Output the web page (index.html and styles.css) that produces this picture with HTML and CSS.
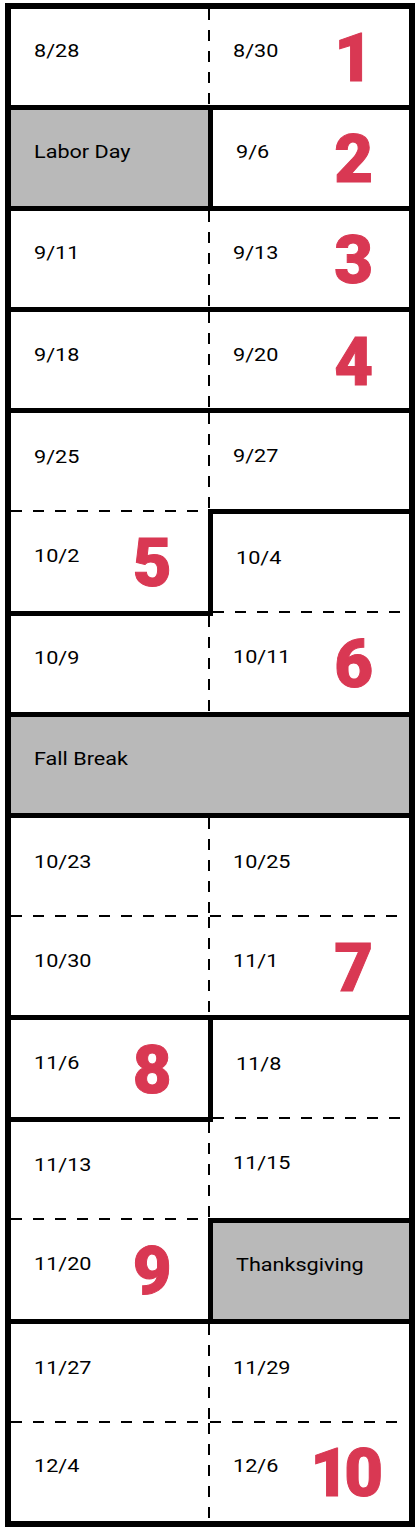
FILE: index.html
```html
<!DOCTYPE html>
<html lang="en">
<head>
<meta charset="utf-8">
<title>Schedule</title>
<link rel="stylesheet" href="styles.css">
</head>
<body>
<table class="cal">
  <tr>
    <td class="dr bb"><div class="in"><span class="d">8/28</span></div></td>
    <td class="bb"><div class="in"><span class="d">8/30</span><span class="n">1</span></div></td>
  </tr>
  <tr>
    <td class="grey br bb"><div class="in"><span class="d">Labor Day</span></div></td>
    <td class="bb"><div class="in"><span class="d">9/6</span><span class="n">2</span></div></td>
  </tr>
  <tr>
    <td class="dr bb"><div class="in"><span class="d">9/11</span></div></td>
    <td class="bb"><div class="in"><span class="d">9/13</span><span class="n">3</span></div></td>
  </tr>
  <tr>
    <td class="dr bb"><div class="in"><span class="d">9/18</span></div></td>
    <td class="bb"><div class="in"><span class="d">9/20</span><span class="n">4</span></div></td>
  </tr>
  <tr>
    <td class="dr db"><div class="in"><span class="d">9/25</span></div></td>
    <td class="bb"><div class="in"><span class="d">9/27</span></div></td>
  </tr>
  <tr>
    <td class="br bb"><div class="in"><span class="d">10/2</span><span class="n">5</span></div></td>
    <td class="db"><div class="in"><span class="d">10/4</span></div></td>
  </tr>
  <tr>
    <td class="dr bb"><div class="in"><span class="d">10/9</span></div></td>
    <td class="bb"><div class="in"><span class="d">10/11</span><span class="n">6</span></div></td>
  </tr>
  <tr>
    <td class="grey bb" colspan="2"><div class="in"><span class="d">Fall Break</span></div></td>
  </tr>
  <tr>
    <td class="dr db"><div class="in"><span class="d">10/23</span></div></td>
    <td class="db"><div class="in"><span class="d">10/25</span></div></td>
  </tr>
  <tr>
    <td class="dr bb"><div class="in"><span class="d">10/30</span></div></td>
    <td class="bb"><div class="in"><span class="d">11/1</span><span class="n">7</span></div></td>
  </tr>
  <tr>
    <td class="br bb"><div class="in"><span class="d">11/6</span><span class="n">8</span></div></td>
    <td class="db"><div class="in"><span class="d">11/8</span></div></td>
  </tr>
  <tr>
    <td class="dr db"><div class="in"><span class="d">11/13</span></div></td>
    <td class="bb"><div class="in"><span class="d">11/15</span></div></td>
  </tr>
  <tr>
    <td class="br bb"><div class="in"><span class="d">11/20</span><span class="n">9</span></div></td>
    <td class="grey bb"><div class="in"><span class="d">Thanksgiving</span></div></td>
  </tr>
  <tr>
    <td class="dr db"><div class="in"><span class="d">11/27</span></div></td>
    <td class="db"><div class="in"><span class="d">11/29</span></div></td>
  </tr>
  <tr>
    <td class="dr"><div class="in"><span class="d">12/4</span></div></td>
    <td><div class="in"><span class="d">12/6</span><span class="n n-wide">10</span></div></td>
  </tr>
</table>
</body>
</html>
```

FILE: styles.css
```css
html, body {
  margin: 0;
  padding: 0;
  background: #ffffff;
}

body {
  font-family: Roboto, "Liberation Sans", sans-serif;
  color: #000000;
}

.cal {
  border-collapse: collapse;
  table-layout: fixed;
  width: 410px;
  margin: 3px 0 0 5px;
  border: 6px solid #000000;
}

.cal tr {
  height: 101.2px;
}

.cal td {
  width: 50%;
  padding: 0;
  vertical-align: middle;
  background-color: #ffffff;
  background-repeat: no-repeat;
}

.cal td.grey {
  background-color: #b9b9b9;
}

.cal td.bb {
  border-bottom: 5px solid #000000;
}

.cal td.br {
  border-right: 5px solid #000000;
}

.cal td.dr {
  background-image: repeating-linear-gradient(to bottom, #000000 0 11px, transparent 11px 21px);
  background-position: right top;
  background-size: 2px 100%;
}

.cal td.db {
  background-image: repeating-linear-gradient(to right, #000000 0 11px, transparent 11px 22px);
  background-position: left bottom;
  background-size: calc(100% - 8px) 2px;
}

.cal td.dr.db {
  background-image:
    repeating-linear-gradient(to bottom, #000000 0 11px, transparent 11px 21px),
    repeating-linear-gradient(to right, #000000 0 11px, transparent 11px 22px);
  background-position: right top, left bottom;
  background-size: 2px 100%, calc(100% - 8px) 2px;
}

.in {
  display: flex;
  align-items: center;
  height: 80px;
  padding: 0 36px 0 23px;
}

.d {
  display: inline-block;
  font-size: 18px;
  line-height: 1;
  white-space: nowrap;
  transform: scaleX(1.2);
  transform-origin: 0 50%;
  margin-bottom: 11px;
}

.n {
  margin-left: auto;
  margin-top: 4px;
  font-size: 67px;
  font-weight: 900;
  line-height: 1;
  color: #d93853;
  -webkit-text-stroke: 1px #d93853;
}

.n-wide {
  letter-spacing: -5px;
  margin-right: -5px;
}
```
